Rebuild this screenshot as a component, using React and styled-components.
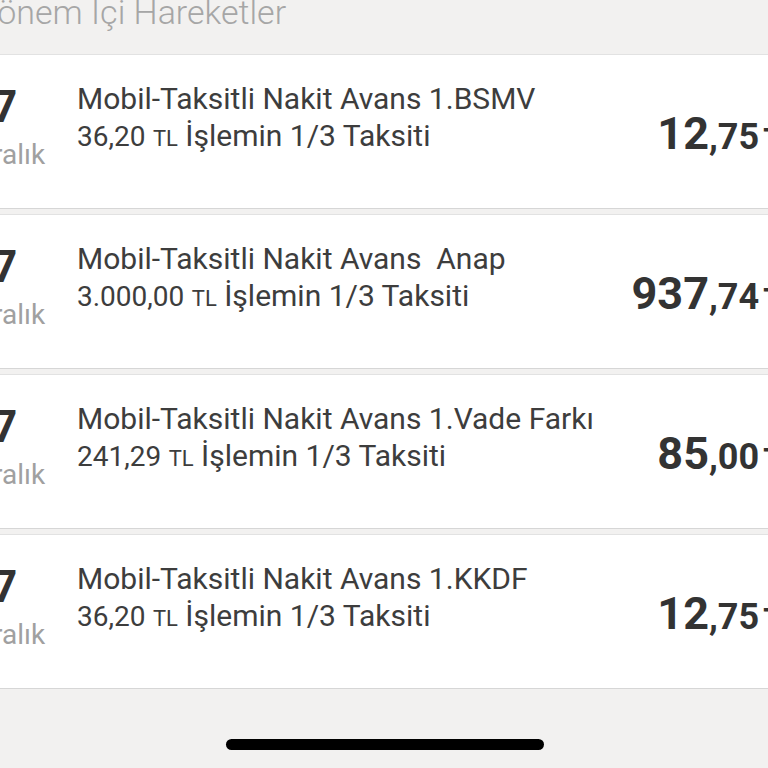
import React from "react";
import styled, { createGlobalStyle } from "styled-components";

const GlobalStyle = createGlobalStyle`
  html, body {
    margin: 0;
    padding: 0;
    background: #f2f1f0;
    overflow: hidden;
  }
  body {
    font-family: Roboto, "Noto Sans", sans-serif;
  }
`;

const items = [
  { day: "27", month: "Aralık", title: "Mobil-Taksitli Nakit Avans 1.BSMV", total: "36", totalDec: "20", major: "12", minor: "75" },
  { day: "27", month: "Aralık", title: "Mobil-Taksitli Nakit Avans  Anap", total: "3.000", totalDec: "00", major: "937", minor: "74" },
  { day: "27", month: "Aralık", title: "Mobil-Taksitli Nakit Avans 1.Vade Farkı", total: "241", totalDec: "29", major: "85", minor: "00" },
  { day: "27", month: "Aralık", title: "Mobil-Taksitli Nakit Avans 1.KKDF", total: "36", totalDec: "20", major: "12", minor: "75" },
];

function App() {
  return (
    <Page>
      <GlobalStyle />
      <Header>
        <h2>Dönem İçi Hareketler</h2>
      </Header>
      <List>
        {items.map((item, i) => (
          <Card key={i}>
            <DateCol>
              <Day>{item.day}</Day>
              <Month>{item.month}</Month>
            </DateCol>
            <Info>
              <Title>{item.title}</Title>
              <Sub>
                <Num>{item.total},{item.totalDec}</Num> <Cur>TL</Cur> İşlemin 1/3 Taksiti
              </Sub>
            </Info>
            <Amount>
              <span>{item.major}</span>
              <Minor>,{item.minor}</Minor>
              <AmountCur>TL</AmountCur>
            </Amount>
          </Card>
        ))}
      </List>
      <Bottom>
        <HomeBar />
      </Bottom>
    </Page>
  );
}

const Page = styled.div`
  width: 860px;
  margin-left: -40px;
  height: 768px;
  display: flex;
  flex-direction: column;
  background: #f2f1f0;
`;

const Header = styled.div`
  height: 54px;
  padding-left: 15px;
  overflow: hidden;

  h2 {
    margin: -5px 0 0;
    font-size: 34px;
    line-height: 34px;
    font-weight: 300;
    color: #a6a6a6;
    white-space: nowrap;
  }
`;

const List = styled.div`
  display: flex;
  flex-direction: column;
  gap: 5px;
`;

const Card = styled.div`
  box-sizing: border-box;
  height: 155px;
  background: #fff;
  border-top: 1px solid #e2e2e2;
  border-bottom: 1px solid #d6d6d6;
  display: flex;
  align-items: flex-start;
`;

const DateCol = styled.div`
  width: 100px;
  margin-right: 17px;
  padding-top: 30px;
  text-align: center;
`;

const Day = styled.div`
  padding-right: 36px;
  font-size: 44px;
  line-height: 44px;
  font-weight: 700;
  color: #333;
`;

const Month = styled.div`
  margin-top: 4px;
  font-size: 28px;
  line-height: 44px;
  color: #a0a0a0;
`;

const Info = styled.div`
  flex: 1;
  padding-top: 25px;
  color: #3d3d3d;
`;

const Title = styled.div`
  font-size: 30px;
  line-height: 37px;
  white-space: pre;
`;

const Sub = styled.div`
  font-size: 30px;
  line-height: 37px;
  white-space: nowrap;
`;

const Num = styled.span`
  font-size: 28px;
`;

const Cur = styled.span`
  font-size: 22px;
`;

const Amount = styled.div`
  padding-top: 55px;
  padding-right: 22px;
  font-size: 45px;
  line-height: 48px;
  font-weight: 700;
  color: #333;
  white-space: nowrap;
`;

const Minor = styled.span`
  font-size: 36px;
`;

const AmountCur = styled.span`
  margin-left: 4px;
  font-size: 30px;
`;

const Bottom = styled.div`
  flex: 1;
  display: flex;
  align-items: flex-end;
  justify-content: center;
  padding-bottom: 18px;
  padding-right: 10px;
`;

const HomeBar = styled.div`
  width: 318px;
  height: 11px;
  border-radius: 6px;
  background: #000;
`;

export default App;
